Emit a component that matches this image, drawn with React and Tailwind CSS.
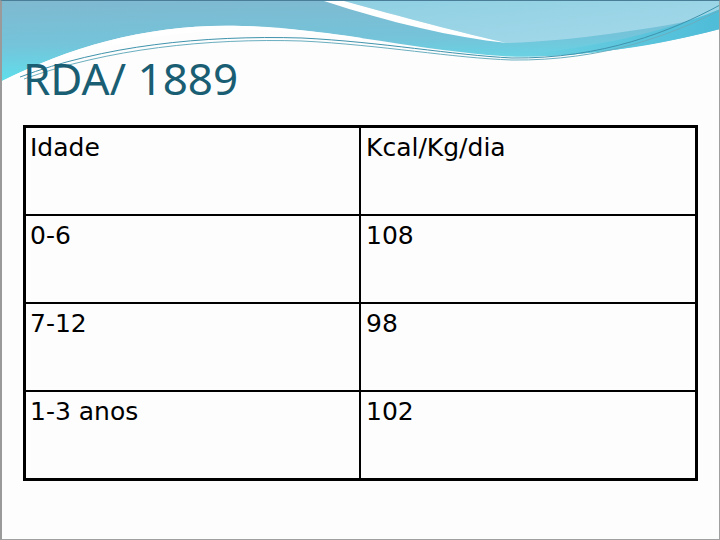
export default function App() {
  const rows = [
    ["Idade", "Kcal/Kg/dia"],
    ["0-6", "108"],
    ["7-12", "98"],
    ["1-3 anos", "102"],
  ];
  return (
    <div className="relative w-[720px] h-[540px] overflow-hidden bg-[#fdfdfd] border-l-2 border-r border-b border-t border-l-[#9a9a9a] border-r-[#a0a0a0] border-b-[#a0a0a0] border-t-[#4a7d98]">
      <svg
        className="absolute top-0 left-0"
        width="718"
        height="110"
        viewBox="0 0 718 110"
      >
        <defs>
          <linearGradient id="g1" x1="0" y1="0" x2="0.15" y2="1">
            <stop offset="0" stopColor="#7fb9d0" />
            <stop offset="0.55" stopColor="#74c4da" />
            <stop offset="1" stopColor="#5ee0ec" />
          </linearGradient>
          <linearGradient id="g2" x1="0" y1="0" x2="1" y2="1">
            <stop offset="0" stopColor="#8fd0e2" />
            <stop offset="1" stopColor="#a5d9ea" />
          </linearGradient>
          <linearGradient id="g3" x1="0" y1="0" x2="1" y2="0">
            <stop offset="0" stopColor="#6ed3e3" />
            <stop offset="1" stopColor="#4fbcd8" />
          </linearGradient>
        </defs>
        <path
          d="M0,0 H718 V28 C640,48 560,58 500,55 C420,50 330,28 240,25 C150,22 70,45 0,80 Z"
          fill="url(#g1)"
        />
        <path
          d="M342,0 H718 V14 C650,28 570,40 505,42 C460,32 400,16 342,0 Z"
          fill="url(#g2)"
        />
        <path
          d="M322,0 L342,0 C400,16 460,32 505,42 C450,36 390,22 322,0 Z"
          fill="#ffffff"
        />
        <path
          d="M718,8 C650,36 570,50 500,55 C570,58 650,46 718,28 Z"
          fill="url(#g3)"
        />
        <path
          d="M360,37 C300,28 260,25 240,25 C150,22 70,45 0,80 L0,82 C70,50 150,30 240,29 C300,30 340,35 360,40 Z"
          fill="#ffffff"
          opacity="0.9"
        />
        <path
          d="M18,76 C100,45 200,34 300,37 C380,41 450,54 510,57 C600,58 670,30 718,4"
          fill="none"
          stroke="#3f93ac"
          strokeWidth="1"
        />
        <path
          d="M22,78 C105,48 205,37 300,40 C380,44 450,57 510,59 C600,60 670,34 718,9"
          fill="none"
          stroke="#6aaebf"
          strokeWidth="1"
        />
      </svg>

      <div className="relative pt-[55px] pl-[21px]">
        <div
          className="pl-[-1px] text-[44px] leading-[44px] text-[#1a5e74]"
          style={{ fontFamily: '"Noto Sans", sans-serif' }}
        >
          RDA/ 1889
        </div>
        <div
          className="mt-[25px] w-[675px] border-[3px] border-black text-black text-[25px] leading-[30px]"
          style={{ fontFamily: '"DejaVu Sans", Verdana, sans-serif' }}
        >
          {rows.map((r, i) => (
            <div
              key={i}
              className={
                i === 0
                  ? "flex h-[86px]"
                  : "flex h-[88px] border-t-2 border-black"
              }
            >
              <div className="w-[335px] border-r-2 border-black pl-[4px] pt-[5px]">
                {r[0]}
              </div>
              <div className="flex-1 pl-[5px] pt-[5px]">{r[1]}</div>
            </div>
          ))}
        </div>
      </div>
    </div>
  );
}
